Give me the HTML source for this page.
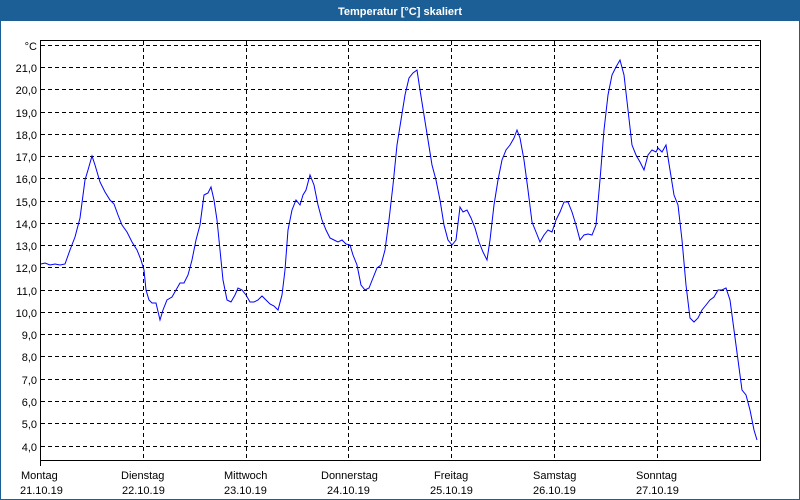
<!DOCTYPE html>
<html><head><meta charset="utf-8"><style>
html,body{margin:0;padding:0;width:800px;height:500px;overflow:hidden;background:#fff}
svg{display:block}
text{font-family:"Liberation Sans",sans-serif;font-size:11px;fill:#000}
</style></head><body>
<svg width="800" height="500" xmlns="http://www.w3.org/2000/svg">
<rect x="0" y="0" width="800" height="500" fill="#1c5f97"/>
<rect x="1" y="21" width="798" height="478" fill="#fff"/>
<text x="400" y="15" text-anchor="middle" style="fill:#fff;font-weight:bold;font-size:11px">Temperatur [°C] skaliert</text>
<g stroke="#000" stroke-width="1" stroke-dasharray="4,3" fill="none">
<path d="M41 45.5H760M41 67.5H760M41 89.5H760M41 112.5H760M41 134.5H760M41 156.5H760M41 178.5H760M41 201.5H760M41 223.5H760M41 245.5H760M41 267.5H760M41 290.5H760M41 312.5H760M41 334.5H760M41 356.5H760M41 379.5H760M41 401.5H760M41 423.5H760M41 446.5H760"/>
<path d="M143.5 41V460M246.5 41V460M348.5 41V460M451.5 41V460M554.5 41V460M657.5 41V460"/>
</g>
<path d="M40.5 40.5H760.5V460.5H40.5Z" fill="none" stroke="#000"/>
<path d="M40.5 460V466" stroke="#000"/>
<g text-anchor="end">
<text x="37" y="50">°C</text>
<text x="37" y="72">21,0</text><text x="37" y="94">20,0</text><text x="37" y="117">19,0</text><text x="37" y="139">18,0</text><text x="37" y="161">17,0</text><text x="37" y="183">16,0</text><text x="37" y="206">15,0</text><text x="37" y="228">14,0</text><text x="37" y="250">13,0</text><text x="37" y="272">12,0</text><text x="37" y="295">11,0</text><text x="37" y="317">10,0</text><text x="37" y="339">9,0</text><text x="37" y="361">8,0</text><text x="37" y="384">7,0</text><text x="37" y="406">6,0</text><text x="37" y="428">5,0</text><text x="37" y="451">4,0</text>
</g>
<g>
<text x="21" y="479">Montag</text><text x="20" y="494">21.10.19</text>
<text x="121" y="479">Dienstag</text><text x="122" y="494">22.10.19</text>
<text x="224" y="479">Mittwoch</text><text x="224" y="494">23.10.19</text>
<text x="321" y="479">Donnerstag</text><text x="327" y="494">24.10.19</text>
<text x="434" y="479">Freitag</text><text x="430" y="494">25.10.19</text>
<text x="533" y="479">Samstag</text><text x="533" y="494">26.10.19</text>
<text x="636" y="479">Sonntag</text><text x="636" y="494">27.10.19</text>
</g>
<polyline fill="none" stroke="#0000ff" stroke-width="1" points="41,264 45,263 50,265 55,264 60,265 65,264 70,250 75,237 80,218 85,180 88,170 92,156 95,165 100,182 105,192 110,200 114,204 118,215 122,225 127,232 132,242 137,250 141,260 144,270 146,290 149,300 152,303 156,303 160,320 163,310 167,300 172,297 176,290 180,283 184,283 188,275 192,260 196,240 200,225 204,195 208,193 211,187 214,200 217,220 220,250 223,280 227,300 231,302 235,295 238,288 242,290 246,295 250,302 254,302 258,300 262,296 266,300 270,304 274,306 278,310 282,295 285,270 288,230 292,210 296,200 300,205 303,195 306,190 310,175 314,185 318,205 322,220 326,230 330,238 334,240 338,242 342,240 346,244 350,245 353,255 357,265 361,285 365,290 369,288 373,278 377,268 381,265 385,250 389,220 393,185 397,145 401,120 405,95 409,78 413,73 417,70 420,90 424,115 428,140 432,165 436,180 440,200 444,225 448,240 452,245 456,240 460,207 463,212 467,210 471,218 475,228 479,242 483,252 487,260 490,240 494,205 498,180 502,160 506,150 510,145 514,138 517,130 520,138 524,160 528,190 532,222 536,232 540,242 544,235 548,230 552,232 556,220 560,212 564,202 568,202 572,212 576,225 580,240 584,235 588,234 592,235 596,225 600,180 604,130 608,95 612,75 616,67 620,60 624,75 628,110 632,145 636,155 640,162 644,170 648,155 652,150 656,152 658,148 662,152 666,145 670,170 674,195 678,205 682,240 686,285 690,318 694,322 698,318 702,310 706,305 710,300 714,297 718,290 722,290 726,288 730,300 734,330 738,360 742,390 746,395 750,410 754,430 757,440"/>
</svg>
</body></html>
